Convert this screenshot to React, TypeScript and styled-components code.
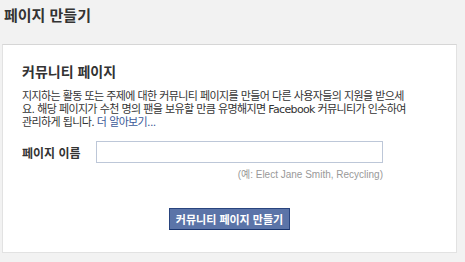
import styled, { createGlobalStyle } from "styled-components";

const GlobalStyle = createGlobalStyle`
  body {
    margin: 0;
    background: #f2f2f2;
    font-family: "Liberation Sans", "Noto Sans CJK KR", sans-serif;
    color: #333;
  }
`;

const Page = styled.div`
  width: 465px;
  height: 262px;
  overflow: hidden;
`;

const TitleBar = styled.h1`
  margin: 0;
  height: 44px;
  box-sizing: border-box;
  padding: 5px 4px 0;
  font-size: 15px;
  line-height: 22px;
  font-weight: bold;
  color: #333;
`;

const Card = styled.div`
  margin: 0 8px 0 2px;
  background: #fff;
  border: 1px solid #e2e2e2;
  border-top-color: #d6d6d6;
  padding: 18px 19px 22px;
`;

const Heading = styled.h2`
  margin: 0 0 9px;
  font-size: 14px;
  line-height: 18px;
  font-weight: bold;
  color: #333;
`;

const Intro = styled.p`
  margin: 0 0 12px;
  font-family: "DejaVu Sans", "Noto Sans CJK KR", sans-serif;
  font-size: 11px;
  line-height: 13px;
  letter-spacing: -0.65px;
  color: #333;
`;

const Link = styled.a`
  color: #3b5998;
  text-decoration: none;
`;

const Form = styled.div`
  display: grid;
  grid-template-columns: 74px 287px;
  row-gap: 5px;
  align-items: center;
`;

const Label = styled.label`
  font-size: 12px;
  font-weight: bold;
  color: #333;
`;

const Input = styled.input`
  box-sizing: border-box;
  width: 100%;
  height: 22px;
  margin: 0;
  border: 1px solid #bdc7d8;
  padding: 2px 4px;
  font-size: 11px;
  outline: none;
`;

const Hint = styled.div<{ $col: number }>`
  grid-column: ${({ $col }) => $col};
  text-align: right;
  font-size: 10px;
  line-height: 13px;
  color: #999;
`;

const Actions = styled.div`
  display: flex;
  justify-content: center;
  margin-top: 27px;
`;

const Button = styled.button`
  height: 22px;
  padding: 0 6px;
  background: #5b74a8;
  border: 1px solid #29447e;
  border-bottom-color: #1a356e;
  color: #fff;
  font-family: inherit;
  font-size: 11px;
  font-weight: bold;
  cursor: pointer;
`;

export default function App() {
  return (
    <Page>
      <GlobalStyle />
      <TitleBar>페이지 만들기</TitleBar>
      <Card>
        <Heading>커뮤니티 페이지</Heading>
        <Intro>
          지지하는 활동 또는 주제에 대한 커뮤니티 페이지를 만들어 다른 사용자들의 지원을 받으세
          <br />
          요. 해당 페이지가 수천 명의 팬을 보유할 만큼 유명해지면 Facebook 커뮤니티가 인수하여
          <br />
          관리하게 됩니다. <Link href="#">더 알아보기...</Link>
        </Intro>
        <Form>
          <Label htmlFor="page-name">페이지 이름</Label>
          <Input id="page-name" type="text" />
          <Hint $col={2}>(예: Elect Jane Smith, Recycling)</Hint>
        </Form>
        <Actions>
          <Button>커뮤니티 페이지 만들기</Button>
        </Actions>
      </Card>
    </Page>
  );
}
